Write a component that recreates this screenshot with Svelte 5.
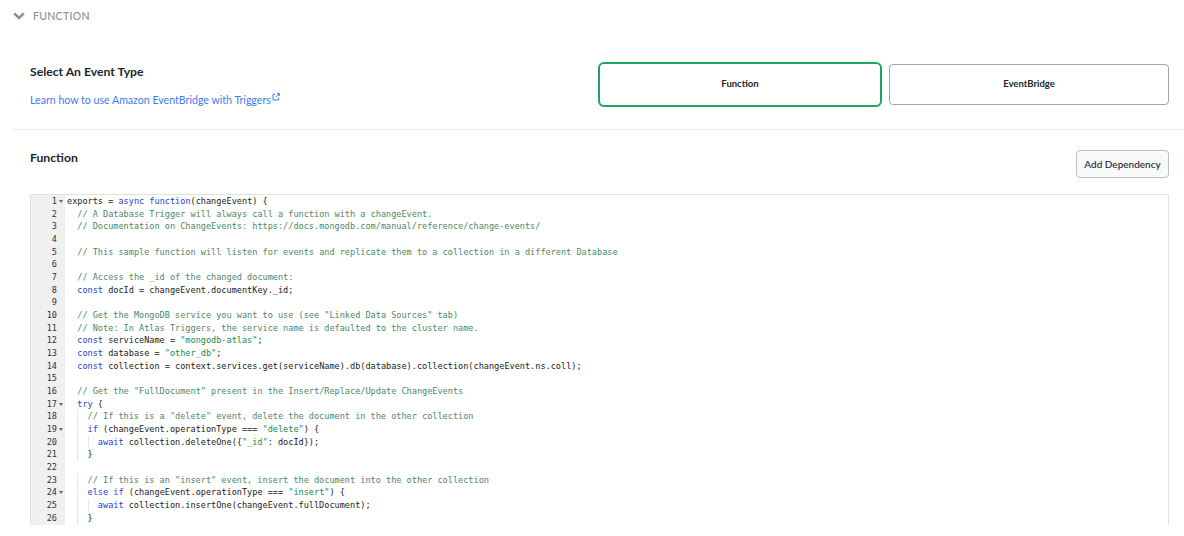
<script lang="ts">
	const source = [
		'exports = async function(changeEvent) {',
		'  // A Database Trigger will always call a function with a changeEvent.',
		'  // Documentation on ChangeEvents: https://docs.mongodb.com/manual/reference/change-events/',
		'',
		'  // This sample function will listen for events and replicate them to a collection in a different Database',
		'',
		'  // Access the _id of the changed document:',
		'  const docId = changeEvent.documentKey._id;',
		'',
		'  // Get the MongoDB service you want to use (see "Linked Data Sources" tab)',
		'  // Note: In Atlas Triggers, the service name is defaulted to the cluster name.',
		'  const serviceName = "mongodb-atlas";',
		'  const database = "other_db";',
		'  const collection = context.services.get(serviceName).db(database).collection(changeEvent.ns.coll);',
		'',
		'  // Get the "FullDocument" present in the Insert/Replace/Update ChangeEvents',
		'  try {',
		'    // If this is a "delete" event, delete the document in the other collection',
		'    if (changeEvent.operationType === "delete") {',
		'      await collection.deleteOne({"_id": docId});',
		'    }',
		'',
		'    // If this is an "insert" event, insert the document into the other collection',
		'    else if (changeEvent.operationType === "insert") {',
		'      await collection.insertOne(changeEvent.fullDocument);',
		'    }'
	]
	const foldable = [1, 17, 19, 24]

	// Split a line into coloured tokens, the way the editor's JS mode does
	function tokenize(code: string) {
		if (code.startsWith('//')) return [{ text: code, kind: 'comment' }]
		const parts = code.split(/("[^"]*"|\b(?:async|function|const|try|if|else|await)\b)/)
		return parts
			.filter((p) => p !== '')
			.map((p) => ({
				text: p,
				kind: p.startsWith('"') ? 'string' : /^(async|function|const|try|if|else|await)$/.test(p) ? 'keyword' : 'plain'
			}))
	}

	const lines = source.map((raw, i) => {
		const code = raw.trimStart()
		return {
			num: i + 1,
			indent: Math.floor((raw.length - code.length) / 2),
			tokens: tokenize(code)
		}
	})
</script>

<div class="page">
	<header class="section-head">
		<svg class="chevron" width="12" height="8" viewBox="0 0 12 8" aria-hidden="true">
			<path d="M1.2 1.4 L6 6 L10.8 1.4" fill="none" stroke="#8c8f8f" stroke-width="2.6" />
		</svg>
		<span>Function</span>
	</header>

	<section class="event-type">
		<div class="event-copy">
			<h2>Select An Event Type</h2>
			<a href="#docs">
				Learn how to use Amazon EventBridge with Triggers<svg width="8" height="8" viewBox="0 0 8 8" aria-hidden="true">
					<path d="M3.2 1.3H1v5.7h5.7V4.8M4.2 3.8 7.2.8M5 .6h2.4V3" fill="none" stroke="#3d7df0" stroke-width="1" />
				</svg>
			</a>
		</div>
		<div class="choices">
			<button class="choice selected">Function</button>
			<button class="choice">EventBridge</button>
		</div>
	</section>

	<section class="function">
		<div class="function-head">
			<h2>Function</h2>
			<button class="add">Add Dependency</button>
		</div>
		<div class="editor">
			{#each lines as line}
				<div class="line">
					<div class="gutter">
						<span>{line.num}</span>
						<i class:fold={foldable.includes(line.num)}></i>
					</div>
					<!-- no whitespace between the spans: white-space is pre in here -->
					<div class="code">{#each { length: line.indent } as _, level}<span class="indent" class:guide={level > 0}></span>{/each}{#each line.tokens as token}<span class={token.kind}>{token.text}</span>{/each}</div>
				</div>
			{/each}
		</div>
	</section>
</div>

<style>
	:global(body) {
		background: #fff;
	}

	.page {
		width: 1184px;
		height: 536px;
		overflow: hidden;
		font-family: Lato, 'Liberation Sans', sans-serif;
		color: #21262a;
	}

	.section-head {
		display: flex;
		align-items: center;
		gap: 8px;
		height: 31px;
		padding-left: 13px;
		font-size: 10.5px;
		font-weight: 500;
		letter-spacing: 0.3px;
		text-transform: uppercase;
		color: #8c8f8f;
	}

	.event-type {
		display: flex;
		justify-content: space-between;
		box-sizing: border-box;
		height: 99px;
		margin-left: 12px;
		padding: 31px 15px 0 18px;
		border-bottom: 1px solid #ebebeb;
	}

	h2 {
		margin: 0;
		font-size: 12.2px;
		font-weight: 700;
		line-height: 20px;
	}

	.event-copy a {
		display: block;
		margin-top: 10px;
		font-size: 10.6px;
		line-height: 16px;
		color: #3d7df0;
		text-decoration: none;
	}

	.event-copy svg {
		margin-left: 1px;
		vertical-align: 3px;
	}

	.choices {
		display: flex;
		align-items: center;
		gap: 7px;
		height: 44px;
	}

	button {
		font-family: inherit;
		color: #21262a;
		background: #fff;
		cursor: pointer;
	}

	.choice {
		width: 280px;
		height: 41px;
		padding: 0 0 2px;
		font-size: 9.5px;
		font-weight: 700;
		border: 1px solid #a3a5a5;
		border-radius: 4px;
	}

	.choice.selected {
		width: 284px;
		height: 45px;
		border: 2px solid #1ea55f;
		border-radius: 6px;
	}

	.function {
		padding: 20px 15px 0 30px;
	}

	.function-head {
		display: flex;
		justify-content: space-between;
		height: 44px;
	}

	.function-head h2 {
		line-height: 16px;
	}

	.add {
		width: 93px;
		height: 28px;
		padding: 0 0 1px;
		font-size: 10px;
		font-weight: 500;
		background: #f8f9f9;
		border: 1px solid #b8c0c0;
		border-radius: 4px;
	}

	.editor {
		border: 1px solid #e0e0e0;
		border-bottom: none;
		font-family: 'DejaVu Sans Mono', monospace;
		font-size: 8.55px;
		overflow: hidden;
	}

	.line {
		display: flex;
		height: 12.68px;
		line-height: 13.4px;
	}

	.line:last-child {
		height: 13.7px;
	}

	.gutter {
		display: flex;
		justify-content: flex-end;
		align-items: flex-start;
		flex: none;
		width: 34px;
		padding-right: 2px;
		box-sizing: border-box;
		background: #f0f0f0;
		color: #333;
	}

	.gutter i {
		flex: none;
		width: 0;
		height: 0;
		margin: 5px 0 0 2px;
		border: 2.5px solid transparent;
		border-top: 0;
	}

	.gutter i.fold {
		border-top: 3px solid #666;
		border-bottom: 0;
	}

	.code {
		flex: 1;
		padding-left: 2px;
		white-space: pre;
		color: #222;
	}

	.indent {
		display: inline-block;
		width: 2ch;
		height: 12.72px;
		box-sizing: border-box;
		vertical-align: top;
	}

	.indent.guide {
		border-left: 1px solid #e8e8e8;
	}

	.comment {
		color: #4c886b;
	}

	.keyword {
		color: #2a40d8;
	}

	.string {
		color: #1a8a3c;
	}
</style>
